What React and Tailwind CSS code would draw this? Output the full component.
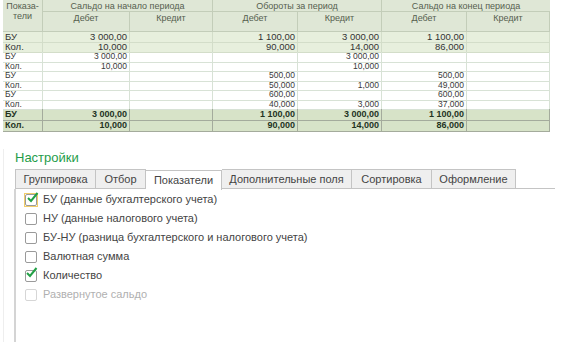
import React from 'react';

const cols = 'grid grid-cols-[40px_87px_83px_85px_84px_85px_83px]';

const rows = [
  { kind: 'top', label: 'БУ', v: ['3 000,00', '', '1 100,00', '3 000,00', '1 100,00', ''] },
  { kind: 'top', label: 'Кол.', v: ['10,000', '', '90,000', '14,000', '86,000', ''] },
  { kind: 'plain', label: 'БУ', v: ['3 000,00', '', '', '3 000,00', '', ''] },
  { kind: 'plain', label: 'Кол.', v: ['10,000', '', '', '10,000', '', ''] },
  { kind: 'plain', label: 'БУ', v: ['', '', '500,00', '', '500,00', ''] },
  { kind: 'plain', label: 'Кол.', v: ['', '', '50,000', '1,000', '49,000', ''] },
  { kind: 'plain', label: 'БУ', v: ['', '', '600,00', '', '600,00', ''] },
  { kind: 'plain', label: 'Кол.', v: ['', '', '40,000', '3,000', '37,000', ''] },
  { kind: 'total', label: 'БУ', v: ['3 000,00', '', '1 100,00', '3 000,00', '1 100,00', ''] },
  { kind: 'total', label: 'Кол.', v: ['10,000', '', '90,000', '14,000', '86,000', ''] },
];

const rowStyle = {
  top: 'h-[10px] bg-[#e7efdd] text-[9.5px] leading-[10px] text-[#333]',
  plain: 'h-[9.5px] bg-white text-[8.5px] leading-[9.5px] text-[#3a3a3a]',
  total: 'h-[11px] bg-[#d7e3c8] text-[9px] leading-[11px] font-bold text-[#24331f]',
};

const lineStyle = {
  top: 'border-[#d3ddc9]',
  plain: 'border-[#d8e2d6]',
  total: 'border-[#a4ab9c]',
};

const tabs = [
  { name: 'Группировка', w: 'w-[81px]' },
  { name: 'Отбор', w: 'w-[50px]' },
  { name: 'Показатели', w: 'w-[76px]', active: true },
  { name: 'Дополнительные поля', w: 'w-[130px]' },
  { name: 'Сортировка', w: 'w-[80px]' },
  { name: 'Оформление', w: 'w-[84px]' },
];

const options = [
  { text: 'БУ (данные бухгалтерского учета)', checked: true, focus: true },
  { text: 'НУ (данные налогового учета)' },
  { text: 'БУ-НУ (разница бухгалтерского и налогового учета)' },
  { text: 'Валютная сумма' },
  { text: 'Количество', checked: true },
  { text: 'Развернутое сальдо', disabled: true },
];

function Check() {
  return (
    <svg className="absolute left-[1px] top-[-3px]" width="13" height="13" viewBox="0 0 13 13">
      <path d="M2 7 L5 10 L11.5 2" fill="none" stroke="#22a046" strokeWidth="2" />
    </svg>
  );
}

function Option({ opt }) {
  return (
    <div className="flex h-[19px] items-center gap-[5px]">
      <div
        className={`relative flex h-[14px] w-[14px] items-center justify-center ${
          opt.focus ? 'border border-[#f2cd6a]' : ''
        }`}
      >
        <div
          className={`h-[12px] w-[12px] rounded-[2px] border bg-white ${
            opt.disabled ? 'border-[#d6d6d6]' : 'border-[#9a9a9a]'
          }`}
        />
        {opt.checked && <Check />}
      </div>
      <span className={`text-[11px] ${opt.disabled ? 'text-[#b0b0b0]' : 'text-[#444]'}`}>{opt.text}</span>
    </div>
  );
}

export default function App() {
  return (
    <div className="h-[342px] w-[563px] overflow-hidden bg-white font-['Liberation_Sans',Arial,sans-serif]">
      {/* Report table */}
      <div className="ml-[3px] w-[547px]">
        <div className={`${cols} grid-rows-[12px_20px] bg-[#dfe7d6] text-[9px] text-[#56604f]`}>
          <div className="row-span-2 border-r border-b border-[#c3cdb9] pt-[2px] text-center leading-[9.5px]">
            Показа-
            <br />
            тели
          </div>
          <div className="col-span-2 border-r border-b border-[#c3cdb9] pt-[1px] text-center leading-[10px]">
            Сальдо на начало периода
          </div>
          <div className="col-span-2 border-r border-b border-[#c3cdb9] pt-[1px] text-center leading-[10px]">
            Обороты за период
          </div>
          <div className="col-span-2 border-b border-[#c3cdb9] pt-[1px] text-center leading-[10px]">
            Сальдо на конец периода
          </div>
          {['Дебет', 'Кредит', 'Дебет', 'Кредит', 'Дебет', 'Кредит'].map((h, i) => (
            <div key={i} className="border-r border-b border-[#c3cdb9] pt-[1px] text-center leading-[10px]">
              {h}
            </div>
          ))}
        </div>
        {rows.map((r, i) => (
          <div key={i} className={`${cols} ${rowStyle[r.kind]}`}>
            <div className={`border-r border-b px-[2px] ${lineStyle[r.kind]}`}>{r.label}</div>
            {r.v.map((val, j) => (
              <div key={j} className={`border-r border-b px-[2px] text-right ${lineStyle[r.kind]}`}>
                {val}
              </div>
            ))}
          </div>
        ))}
      </div>

      {/* Settings */}
      <div className="mt-[18px] ml-[3px] h-[220px] border-l border-[#eeeeee] pl-[10px]">
        <div className="pt-[1px] pl-[1px] text-[13px] leading-[16px] text-[#1f9d4a]">Настройки</div>
        <div className="mt-[3px] ml-[1px] flex h-[20px] w-[540px] border-b border-[#c4c4c4]">
          {tabs.map((t) => (
            <div
              key={t.name}
              className={`${t.w} flex items-center justify-center border-t border-r text-[11px] text-[#444] first:border-l ${
                t.active
                  ? 'relative top-[1px] h-[20px] border-[#c4c4c4] bg-white'
                  : 'border-[#c4c4c4] bg-[#efefef]'
              }`}
            >
              {t.name}
            </div>
          ))}
        </div>
        <div className="h-[160px] border-l-2 border-[#d4d4d4] pt-[1px] pl-[8px]">
          {options.map((o) => (
            <Option key={o.text} opt={o} />
          ))}
        </div>
      </div>
    </div>
  );
}
